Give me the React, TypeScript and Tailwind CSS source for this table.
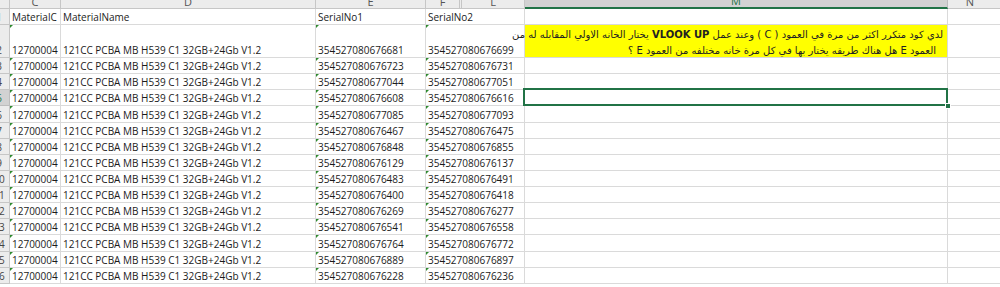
import React from "react";

const serials: [string, string][] = [
  ["354527080676681", "354527080676699"],
  ["354527080676723", "354527080676731"],
  ["354527080677044", "354527080677051"],
  ["354527080676608", "354527080676616"],
  ["354527080677085", "354527080677093"],
  ["354527080676467", "354527080676475"],
  ["354527080676848", "354527080676855"],
  ["354527080676129", "354527080676137"],
  ["354527080676483", "354527080676491"],
  ["354527080676400", "354527080676418"],
  ["354527080676269", "354527080676277"],
  ["354527080676541", "354527080676558"],
  ["354527080676764", "354527080676772"],
  ["354527080676889", "354527080676897"],
  ["354527080676228", "354527080676236"],
];

const cellBase =
  "relative shrink-0 border-r border-b border-[#dadada] flex items-end whitespace-nowrap overflow-hidden pl-[2px] leading-[13px]";

function Tri() {
  return (
    <span className="absolute top-0 left-0 w-0 h-0 border-t-[3px] border-r-[3px] border-t-[#2f8a2f] border-r-transparent" />
  );
}

function RowHead({ n, sel }: { n: number; sel?: boolean }) {
  return (
    <div
      className={
        "shrink-0 w-[10px] overflow-hidden flex items-end border-b border-r " +
        (sel
          ? "bg-[#d2d2d2] border-[#bdbdbd] text-[#217346]"
          : "bg-[#ececec] border-[#c6c6c6] text-[#444]")
      }
    >
      <div className="shrink-0 w-[20px] ml-[-11px] text-center text-[10px] leading-[13px]">
        {n}
      </div>
    </div>
  );
}

function HeadCell({ w, label, sel }: { w: string; label: string; sel?: boolean }) {
  return (
    <div
      className={
        w +
        " shrink-0 h-full overflow-hidden flex items-end justify-center border-r " +
        (sel
          ? "bg-[#d2d2d2] border-b-2 border-b-[#217346] border-r-[#bdbdbd] text-[#217346]"
          : "bg-[#ececec] border-b border-[#c6c6c6] text-[#555]")
      }
    >
      <span className="text-[11px] leading-[11px] mb-[1px]">{label}</span>
    </div>
  );
}

function DataRow({
  n,
  a,
  b,
  tall,
  sel,
  note,
}: {
  n: number;
  a: string;
  b: string;
  tall?: boolean;
  sel?: boolean;
  note?: boolean;
}) {
  return (
    <div className={"flex " + (tall ? "h-[33px]" : "h-[16.13px]")}>
      <RowHead n={n} sel={sel} />
      <div className={cellBase + " w-[51px]"}>
        <Tri />
        12700004
      </div>
      <div className={cellBase + " w-[255px]"}>121CC PCBA MB H539 C1 32GB+24Gb V1.2</div>
      <div className={cellBase + " w-[110px]"}>
        <Tri />
        {a}
      </div>
      <div className={cellBase + " w-[99px]"}>
        <Tri />
        {b}
      </div>
      {note ? (
        <div className="relative shrink-0 w-[423px] border-r border-b border-[#dadada] bg-[#ffff00] pt-[2px] pr-[4px]">
          <div
            dir="rtl"
            className="text-[10px] leading-[16px] text-[#222] whitespace-nowrap"
            style={{ fontFamily: '"DejaVu Sans", "Liberation Sans", sans-serif' }}
          >
            <div>
              لدي كود متكرر اكثر من مرة في العمود ( C ) وعند عمل{" "}
              <span className="font-bold">VLOOK UP</span>  يختار الخانه الاولي المقابله له من
            </div>
            <div className="pr-[7px]">
              العمود E هل هناك طريقه يختار بها في كل مرة خانه مختلفه من العمود E ؟
            </div>
          </div>
        </div>
      ) : (
        <div className="relative shrink-0 w-[423px] border-r border-b border-[#dadada]">
          {sel && (
            <>
              <div className="absolute z-10 left-[-2px] top-[-2px] right-[-1px] bottom-[-1px] border-2 border-[#217346]" />
              <div className="absolute z-20 right-[-4px] bottom-[-4px] w-[6px] h-[6px] bg-[#217346] border border-white" />
            </>
          )}
        </div>
      )}
      <div className="flex-1 border-b border-[#dadada]" />
    </div>
  );
}

export default function App() {
  return (
    <div
      className="w-[1000px] h-[287px] overflow-hidden bg-white text-[#1b1b1b] text-[10px]"
      style={{ fontFamily: '"Open Sans", "DejaVu Sans", sans-serif' }}
    >
      {/* column headers */}
      <div className="flex h-[9px]">
        <div className="shrink-0 w-[10px] h-full bg-[#ececec] border-r border-b border-[#c6c6c6]" />
        <HeadCell w="w-[51px]" label="C" />
        <HeadCell w="w-[255px]" label="D" />
        <HeadCell w="w-[110px]" label="E" />
        <HeadCell w="w-[34px]" label="F" />
        <HeadCell w="w-[2px]" label="" />
        <HeadCell w="w-[63px]" label="L" />
        <HeadCell w="w-[423px]" label="M" sel />
        <div className="flex-1 h-full bg-[#ececec] border-b border-[#c6c6c6] flex items-end justify-center pr-[8px] text-[#555] overflow-hidden">
          <span className="text-[11px] leading-[11px] mb-[1px]">N</span>
        </div>
      </div>
      {/* row 1 */}
      <div className="flex h-[16px]">
        <RowHead n={1} />
        <div className={cellBase + " w-[51px]"}>MaterialC</div>
        <div className={cellBase + " w-[255px]"}>MaterialName</div>
        <div className={cellBase + " w-[110px]"}>SerialNo1</div>
        <div className={cellBase + " w-[99px]"}>SerialNo2</div>
        <div className="shrink-0 w-[423px] border-r border-b border-[#dadada]" />
        <div className="flex-1 border-b border-[#dadada]" />
      </div>
      {serials.map(([a, b], i) => (
        <DataRow key={i} n={i + 2} a={a} b={b} tall={i === 0} note={i === 0} sel={i + 2 === 5} />
      ))}
    </div>
  );
}
